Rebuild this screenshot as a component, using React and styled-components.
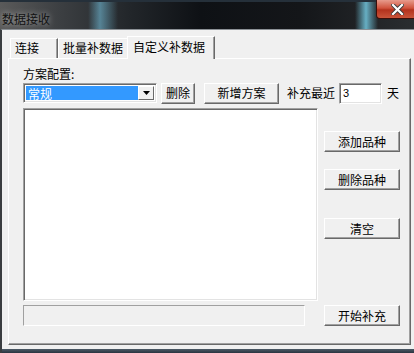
import styled, { createGlobalStyle } from 'styled-components';

const GlobalStyle = createGlobalStyle`
    html, body {
        margin: 0;
        padding: 0;
        background: #1a1d22;
    }
    body {
        font-family: "Noto Sans CJK SC", "DejaVu Sans", sans-serif;
        font-size: 12px;
        color: #000;
    }
`;

const Window = styled.div`
    width: 414px;
    height: 353px;
    display: flex;
    flex-direction: column;
    overflow: hidden;
`;

const TitleBar = styled.div`
    height: 29px;
    flex-shrink: 0;
    display: flex;
    align-items: center;
    justify-content: space-between;
    background:
        linear-gradient(90deg, transparent 0, transparent 88px, rgba(120, 200, 230, 0.55) 100px, transparent 118px, transparent 355px, rgba(120, 210, 235, 0.8) 366px, transparent 378px),
        linear-gradient(90deg, #5a5a5a 0, #3c3f42 60px, #22262a 130px, #0e1115 200px, #141619 300px, #2a2d30 414px);
    border-top: 2px solid #25303a;
    box-sizing: border-box;
`;

const Title = styled.span`
    padding-left: 2px;
    font-size: 12px;
    color: #111;
    text-shadow: 0 0 6px rgba(255, 255, 255, 0.6);
    margin-top: 6px;
`;

const CloseButton = styled.div`
    align-self: flex-start;
    width: 40px;
    height: 18px;
    margin-top: -2px;
    margin-right: -4px;
    border: 1px solid #3b0f0a;
    border-top: none;
    border-radius: 0 0 4px 4px;
    background: linear-gradient(180deg, #e79b8c 0, #d0533d 45%, #b3321d 55%, #c9543a 100%);
    display: flex;
    align-items: center;
    justify-content: center;
`;

const Client = styled.div`
    flex: 1;
    background: #f0f0f0;
    border-top: 1px solid #8c9196;
    border-left: 2px solid #3a3d40;
    display: flex;
    flex-direction: column;
    padding: 5px 3px 0 6px;
`;

const TabStrip = styled.div`
    display: flex;
    align-items: flex-end;
    height: 23px;
    padding-left: 2px;
`;

const Tab = styled.div`
    height: ${(p) => (p.$active ? '23px' : '20px')};
    width: ${(p) => p.$w}px;
    box-sizing: border-box;
    background: #f0f0f0;
    border-top: 1px solid #fff;
    border-left: 1px solid #fff;
    border-right: 1px solid #696969;
    box-shadow: inset -1px 0 #a0a0a0;
    padding: ${(p) => (p.$active ? '2px 0 0 5px' : '1px 0 0 4px')};
    margin: ${(p) => (p.$active ? '0 -2px -1px -2px' : '0')};
    position: relative;
    z-index: ${(p) => (p.$active ? 1 : 0)};
    line-height: 16px;
`;

const Panel = styled.div`
    flex: 1;
    border-top: 1px solid #fff;
    border-left: 1px solid #fff;
    border-right: 1px solid #696969;
    border-bottom: 1px solid #696969;
    box-shadow: inset -1px -1px #a0a0a0;
    display: grid;
    grid-template-columns: 295px 1fr;
    grid-template-rows: 14px 21px 193px 1fr;
    padding: 8px 0 0 14px;
    margin-bottom: 4px;
`;

const Label = styled.div`
    grid-column: 1 / 3;
    line-height: 14px;
`;

const ControlRow = styled.div`
    grid-column: 1 / 3;
    display: flex;
    align-items: center;
    margin-top: 3px;
`;

const Sunken = styled.div`
    box-sizing: border-box;
    border-top: 1px solid #a0a0a0;
    border-left: 1px solid #a0a0a0;
    border-right: 1px solid #fff;
    border-bottom: 1px solid #fff;
    box-shadow: inset 1px 1px #696969, inset -1px -1px #e3e3e3;
    background: #fff;
`;

const Combo = styled(Sunken)`
    width: 134px;
    height: 20px;
    display: flex;
    padding: 2px;
`;

const ComboValue = styled.div`
    flex: 1;
    background: #3399ff;
    color: #fff;
    line-height: 16px;
    padding-left: 2px;
`;

const DropButton = styled.div`
    width: 16px;
    box-sizing: border-box;
    background: #f0f0f0;
    border-top: 1px solid #fff;
    border-left: 1px solid #fff;
    border-right: 1px solid #696969;
    border-bottom: 1px solid #696969;
    display: flex;
    align-items: center;
    justify-content: center;
`;

const Button = styled.div`
    box-sizing: border-box;
    width: ${(p) => p.$w}px;
    height: 21px;
    margin-left: ${(p) => p.$ml || 0}px;
    margin-top: ${(p) => p.$mt || 0}px;
    background: #f0f0f0;
    border-top: 1px solid #fff;
    border-left: 1px solid #fff;
    border-right: 1px solid #696969;
    border-bottom: 1px solid #696969;
    box-shadow: inset -1px -1px #a0a0a0;
    display: flex;
    align-items: center;
    justify-content: center;
    line-height: 14px;
`;

const Text = styled.span`
    margin-left: ${(p) => p.$ml}px;
    line-height: 14px;
`;

const DaysInput = styled(Sunken)`
    width: 43px;
    height: 21px;
    margin-left: 4px;
    padding: 3px 0 0 3px;
    font-family: "Liberation Sans", sans-serif;
    font-size: 11px;
    line-height: 13px;
`;

const ListBox = styled(Sunken)`
    margin-top: 6px;
    height: 193px;
`;

const SideButtons = styled.div`
    display: flex;
    flex-direction: column;
    padding: 29px 0 0 6px;
`;

const BottomRow = styled.div`
    grid-column: 1 / 3;
    display: grid;
    grid-template-columns: 282px 1fr;
    column-gap: 19px;
    margin-top: 10px;
    height: 21px;
`;

const Progress = styled.div`
    box-sizing: border-box;
    height: 21px;
    border-top: 1px solid #a0a0a0;
    border-left: 1px solid #a0a0a0;
    border-right: 1px solid #fff;
    border-bottom: 1px solid #fff;
`;

const WindowBottom = styled.div`
    height: 4px;
    background: linear-gradient(180deg, #4c5a66, #2a3440);
    margin: 0 -3px 0 -6px;
`;

export default function App() {
    return (
        <Window>
            <GlobalStyle />
            <TitleBar>
                <Title>数据接收</Title>
                <CloseButton>
                    <svg width="13" height="11" viewBox="0 0 13 11">
                        <path d="M2 1 L11 10 M11 1 L2 10" stroke="#3a3a3a" strokeWidth="4" strokeLinecap="square" />
                        <path d="M2 1 L11 10 M11 1 L2 10" stroke="#fff" strokeWidth="2.2" strokeLinecap="square" />
                    </svg>
                </CloseButton>
            </TitleBar>
            <Client>
                <TabStrip>
                    <Tab $w={48}>连接</Tab>
                    <Tab $w={71}>批量补数据</Tab>
                    <Tab $w={88} $active>自定义补数据</Tab>
                </TabStrip>
                <Panel>
                    <Label>方案配置:</Label>
                    <ControlRow>
                        <Combo>
                            <ComboValue>常规</ComboValue>
                            <DropButton>
                                <svg width="7" height="4" viewBox="0 0 7 4">
                                    <path d="M0 0 H7 L3.5 4 Z" fill="#000" />
                                </svg>
                            </DropButton>
                        </Combo>
                        <Button $w={34} $ml={4}>删除</Button>
                        <Button $w={75} $ml={9}>新增方案</Button>
                        <Text $ml={8}>补充最近</Text>
                        <DaysInput>3</DaysInput>
                        <Text $ml={5}>天</Text>
                    </ControlRow>
                    <ListBox />
                    <SideButtons>
                        <Button $w={76}>添加品种</Button>
                        <Button $w={76} $mt={17}>删除品种</Button>
                        <Button $w={76} $mt={28}>清空</Button>
                    </SideButtons>
                    <BottomRow>
                        <Progress />
                        <Button $w={76}>开始补充</Button>
                    </BottomRow>
                </Panel>
                <WindowBottom />
            </Client>
        </Window>
    );
}
